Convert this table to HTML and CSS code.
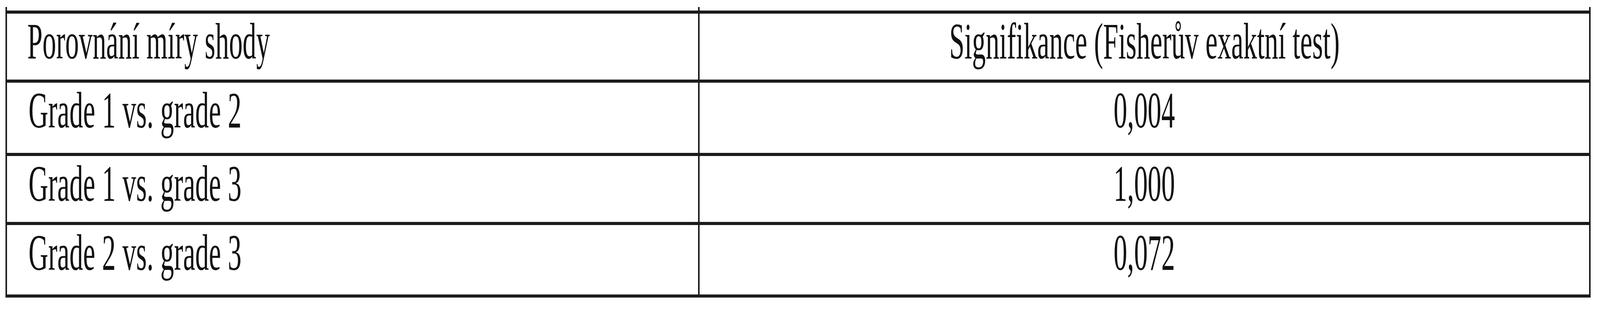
FILE: index.html
```html
<!DOCTYPE html>
<html lang="cs">
<head>
<meta charset="utf-8">
<title>Porovnání míry shody</title>
<link rel="stylesheet" href="styles.css">
</head>
<body>
<div class="page">
<div class="tbl">
  <div class="row spacer"><div class="c1"></div><div class="c2"></div></div>
  <div class="row head"><div class="c1"><span class="t">Porovnání míry shody</span></div><div class="c2"><span class="t">Signifikance (Fisherův exaktní test)</span></div></div>
  <div class="row r1"><div class="c1"><span class="t">Grade 1 vs. grade 2</span></div><div class="c2"><span class="t">0,004</span></div></div>
  <div class="row r2"><div class="c1"><span class="t">Grade 1 vs. grade 3</span></div><div class="c2"><span class="t">1,000</span></div></div>
  <div class="row r3"><div class="c1"><span class="t">Grade 2 vs. grade 3</span></div><div class="c2"><span class="t">0,072</span></div></div>
</div>
</div>
</body>
</html>
```
FILE: styles.css
```css
html, body {
  margin: 0;
  padding: 0;
  background: #ffffff;
}
.page {
  padding: 18px 0 0 0.3516vw;
  font-family: "Liberation Serif", "Times New Roman", serif;
  font-size: 131px;
  line-height: 131px;
  color: #111111;
}
.tbl {
  box-sizing: border-box;
  width: 99.0625vw;
  border-left: 0.1042vw solid #1c1c1c;
  border-right: 0.1042vw solid #1c1c1c;
  border-bottom: 8px solid #1c1c1c;
}
.row {
  display: flex;
  border-top: 8px solid #1c1c1c;
}
.row.spacer {
  border-top: none;
  height: 9px;
}
.c1 {
  box-sizing: border-box;
  width: 43.281vw;
  flex: none;
  border-right: 0.1042vw solid #1c1c1c;
  padding: 5px 0 0 1.328vw;
  white-space: nowrap;
}
.c2 {
  box-sizing: border-box;
  flex: 1 1 0;
  min-width: 0;
  text-align: center;
  padding: 5px 0 0 0;
  white-space: nowrap;
}
.head .c1 {
  padding-left: 1.25vw;
}
.head { height: 169px; }
.r1 { height: 180px; }
.r2 { height: 169px; }
.r3 { height: 178px; }
.spacer .c1, .spacer .c2 { padding: 0; }
.t {
  display: inline-block;
}
.c1 .t { transform-origin: left center; }
.c2 .t { transform-origin: center center; }
@media (max-width: 7000px) {
  .t { transform: scaleX(0.5333); }
}
```
